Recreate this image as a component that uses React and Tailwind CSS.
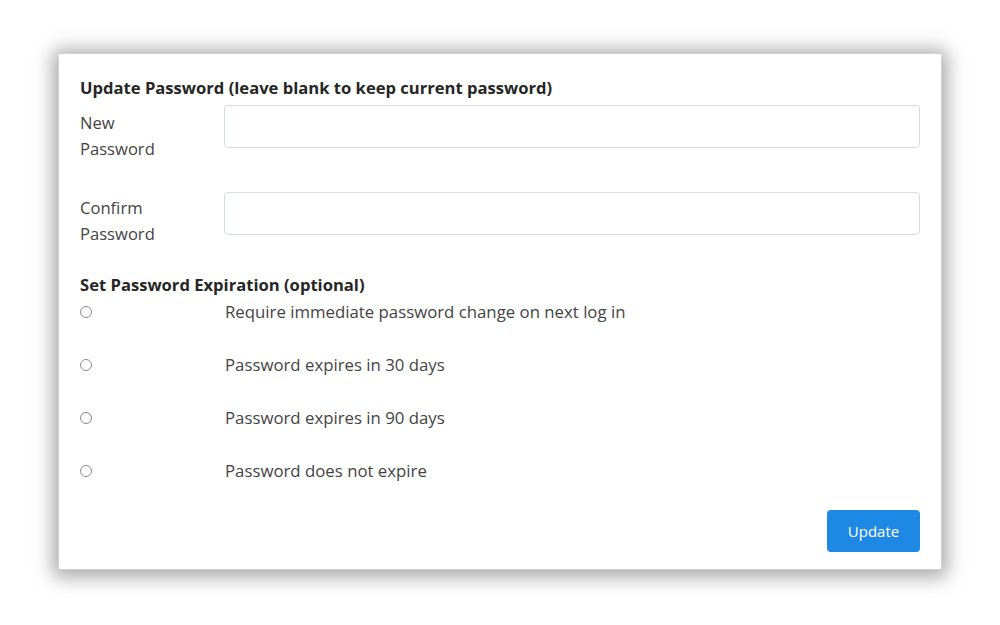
export default function App() {
  const font = { fontFamily: '"Open Sans", "Noto Sans", "Liberation Sans", sans-serif' };
  const options = [
    'Require immediate password change on next log in',
    'Password expires in 30 days',
    'Password expires in 90 days',
    'Password does not expire',
  ];
  return (
    <div className="w-[1000px] h-[625px] bg-white pt-[53px] pl-[58px]" style={font}>
      <div className="w-[884px] h-[517px] bg-white border border-[#d0d0d0] shadow-[0_2px_18px_5px_rgba(0,0,0,0.35)] pt-[24px] px-[21px] flex flex-col">
        <div className="text-[16.6px] leading-[20px] font-bold text-[#262626]">
          Update Password (leave blank to keep current password)
        </div>
        <div className="mt-[7px] flex items-start">
          <div className="w-[144px] pt-[5px] text-[16.6px] leading-[26px] text-[#444]">
            New<br />Password
          </div>
          <div className="flex-1 h-[43px] rounded-[4px] border border-[#d6dbe0] bg-white" />
        </div>
        <div className="mt-[30px] flex items-start">
          <div className="w-[144px] pt-[3px] text-[16.6px] leading-[26px] text-[#444]">
            Confirm<br />Password
          </div>
          <div className="flex-1 h-[43px] rounded-[4px] border border-[#d6dbe0] bg-white" />
        </div>
        <div className="mt-[28px] text-[16.6px] leading-[20px] font-bold text-[#262626]">
          Set Password Expiration (optional)
        </div>
        <div className="mt-[7px] flex flex-col gap-[33px]">
          {options.map((o) => (
            <div key={o} className="flex items-center h-[20px]">
              <div className="w-[145px] flex items-center">
                <div className="w-[12px] h-[12px] rounded-full border border-[#8a8a8a] bg-white" />
              </div>
              <div className="text-[16.8px] leading-[20px] text-[#444]">{o}</div>
            </div>
          ))}
        </div>
        <div className="mt-[29px] flex justify-end">
          <button className="w-[93px] h-[42px] rounded-[4px] bg-[#1e88e5] text-white text-[15px]">
            Update
          </button>
        </div>
      </div>
    </div>
  );
}
